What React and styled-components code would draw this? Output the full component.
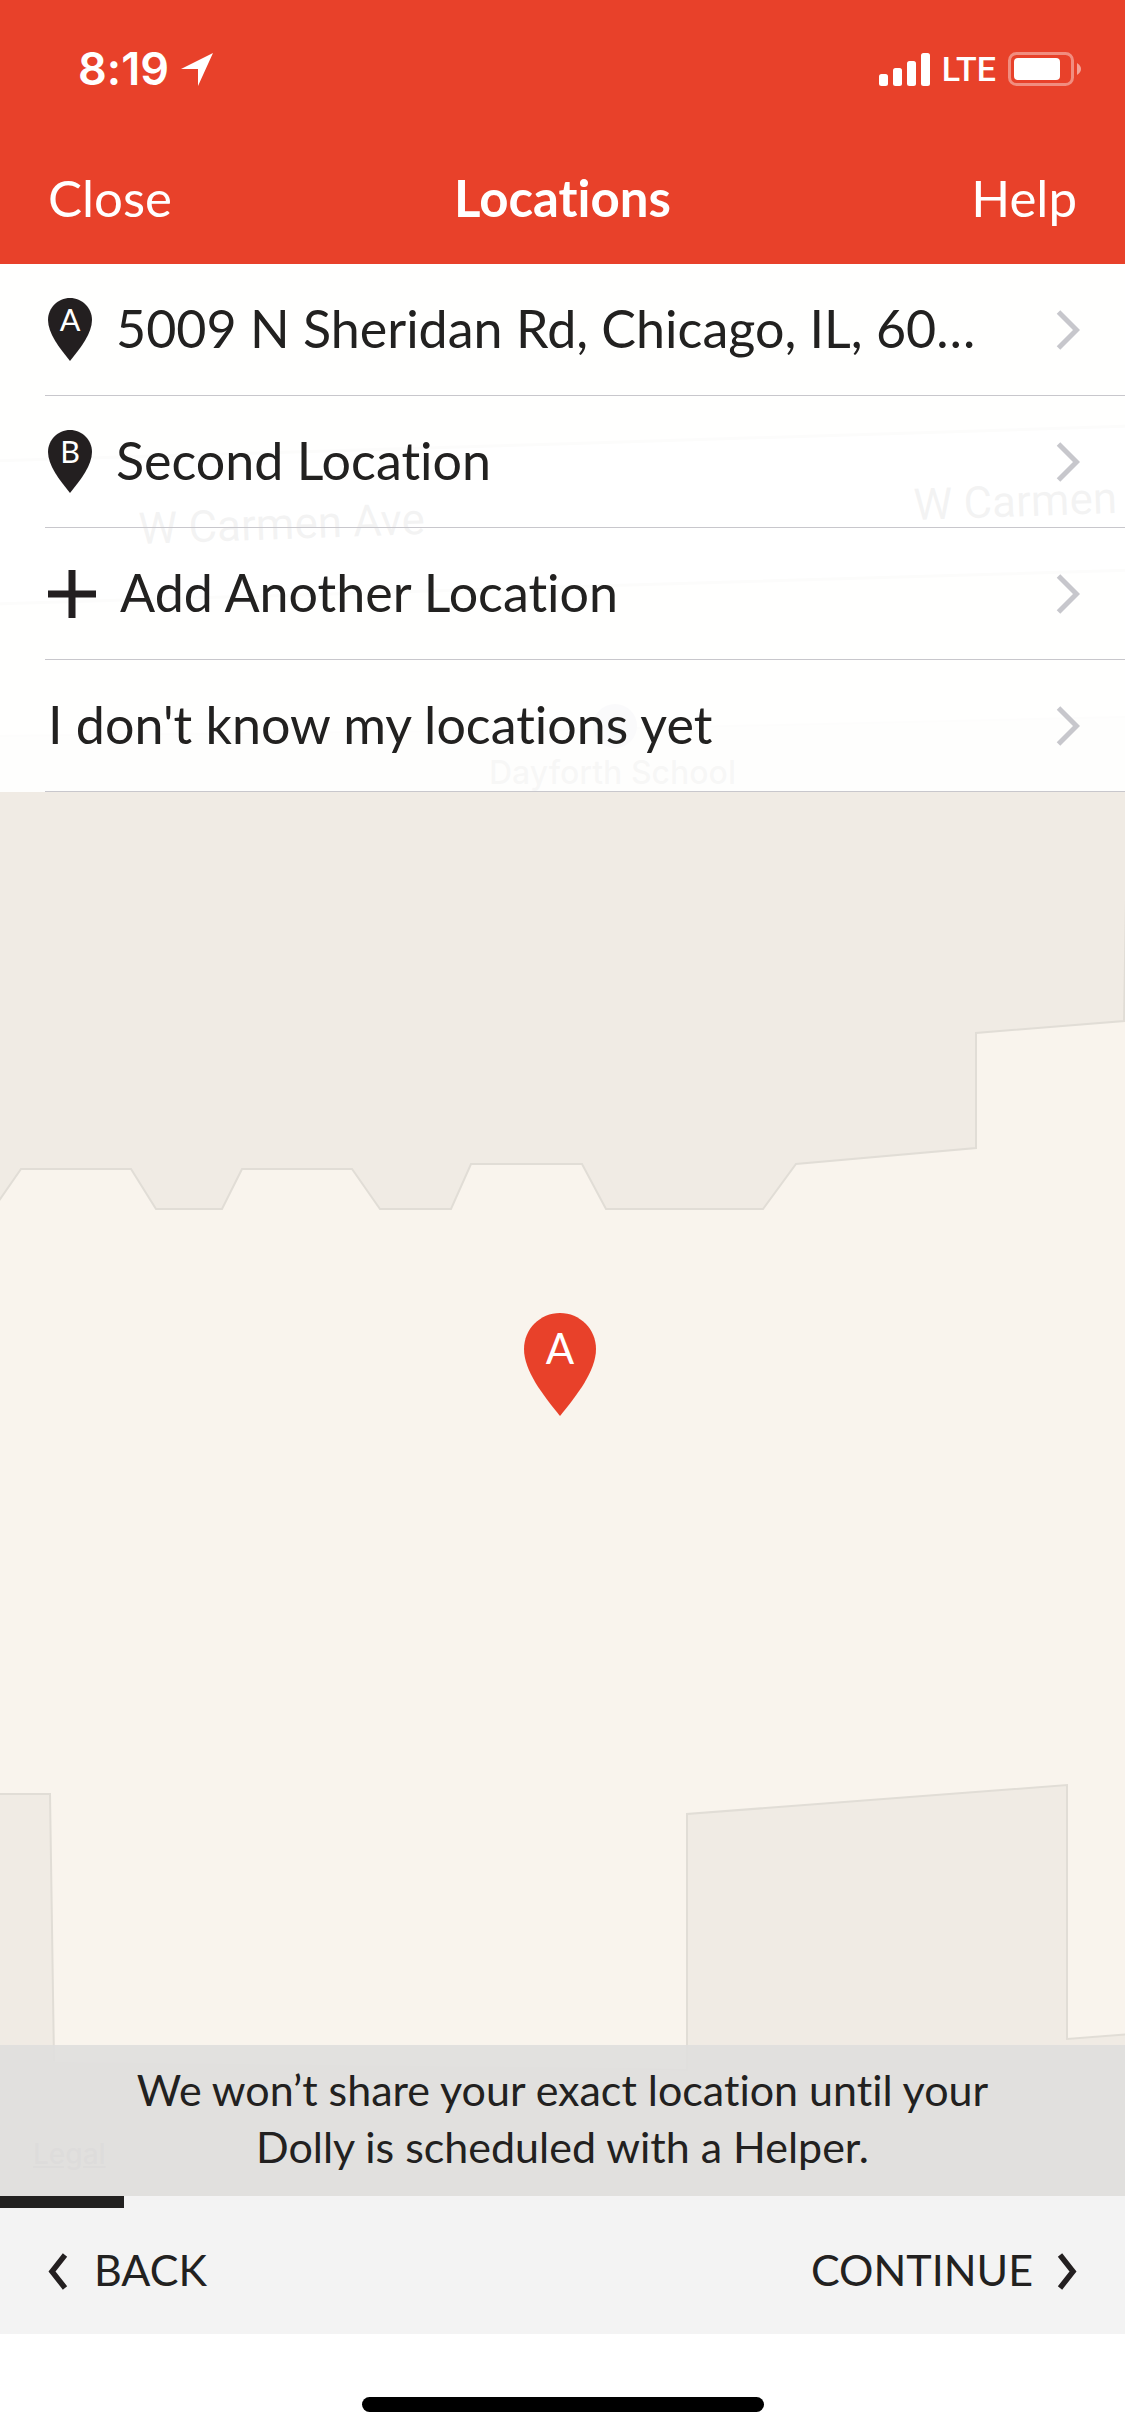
import React from "react";
import styled, { createGlobalStyle } from "styled-components";

const INK = "#222120";
const RED = "#e8412a";

const GlobalStyle = createGlobalStyle`
  *, *::before, *::after { box-sizing: border-box; }
  body { margin: 0; background: #fff; }
  button { margin: 0; padding: 0; border: 0; background: none; color: inherit; font: inherit; cursor: pointer; }
`;

const Screen = styled.div`
  display: flex;
  flex-direction: column;
  min-height: 100vh;
  color: ${INK};
  font-family: Lato, "Open Sans", sans-serif;
  font-variant-ligatures: none;
`;

const Header = styled.header`
  background: ${RED};
  color: #fff;
`;

const StatusBar = styled.div`
  display: flex;
  align-items: center;
  justify-content: space-between;
  height: 132px;
  padding: 6px 44px 0 78px;
  font-family: Inter, sans-serif;
`;

const StatusGroup = styled.div`
  display: flex;
  align-items: center;
  gap: 12px;
`;

const Clock = styled.span`
  font-size: 45px;
  font-weight: 600;
  line-height: 54px;
`;

const Carrier = styled.span`
  font-family: Roboto, sans-serif;
  font-size: 34px;
  font-weight: 500;
  line-height: 40px;
`;

const NavBar = styled.nav`
  display: grid;
  grid-template-columns: 1fr auto 1fr;
  align-items: center;
  height: 132px;
  padding: 0 48px;
  font-size: 51px;
  line-height: 64px;
`;

const NavButton = styled.button`
  justify-self: ${(p) => p.$side};
`;

const Title = styled.h1`
  margin: 0;
  font-size: 51px;
  font-weight: 700;
`;

const MapArea = styled.main`
  position: relative;
  flex: 1;
  display: flex;
  flex-direction: column;
  justify-content: space-between;
  overflow: hidden;
  background: #f9f4ed;
`;

const MapCanvas = styled.svg`
  position: absolute;
  inset: 0;
  width: 100%;
  height: 100%;
`;

const MapPin = styled.div`
  position: absolute;
  left: 49.8%;
  top: 1049px;
  transform: translateX(-50%);
  line-height: 0;
`;

const LegalLink = styled.a`
  position: absolute;
  left: 33px;
  bottom: 26px;
  color: #b4b4b2;
  font: 500 28px/32px Inter, sans-serif;
`;

const LocationList = styled.ul`
  position: relative;
  margin: 0;
  padding: 0;
  list-style: none;
  background: rgba(255, 255, 255, 0.93);
`;

const LocationItem = styled.li`
  margin-left: 45px;
  border-bottom: 1px solid #c8c7cc;
`;

const LocationButton = styled.button`
  display: flex;
  align-items: center;
  gap: 24px;
  width: 100%;
  height: 131px;
  padding: 0 45px 0 3px;
  text-align: left;
  font-size: 52px;
  line-height: 64px;
`;

const LocationLabel = styled.span`
  flex: 1;
  min-width: 0;
  padding-bottom: 3px;
  overflow: hidden;
  white-space: nowrap;
`;

const Notice = styled.p`
  position: relative;
  margin: 0;
  padding: 16px 96px 21px;
  background: rgba(224, 223, 222, 0.93);
  text-align: center;
  font-size: 43px;
  line-height: 57px;
`;

const NoticeLine = styled.span`
  display: block;
`;

const Progress = styled.div`
  height: 12px;
  background: #f3f3f3;
`;

const ProgressFill = styled.div`
  width: 11%;
  height: 100%;
  background: ${INK};
`;

const Footer = styled.footer`
  display: flex;
  align-items: center;
  justify-content: space-between;
  height: 126px;
  padding: 0 48px;
  background: #f3f3f3;
`;

const FooterButton = styled.button`
  display: flex;
  align-items: center;
  gap: ${(p) => p.$gap}px;
  font-size: 43px;
  line-height: 54px;
`;

const FooterLabel = styled.span`
  padding-bottom: 3px;
`;

const HomeArea = styled.div`
  display: flex;
  justify-content: center;
  align-items: flex-end;
  height: 102px;
  padding-bottom: 24px;
  background: #fff;
`;

const HomeIndicator = styled.div`
  width: 402px;
  height: 15px;
  border-radius: 8px;
  background: #000;
`;

const PinText = styled.text`
  font-family: Lato, sans-serif;
  fill: #fff;
  text-anchor: middle;
`;

function Pin({ letter, color, width, height, textSize, baseline }) {
  return (
    <svg width={width} height={height} viewBox="0 0 72 103" aria-hidden="true">
      <path
        fill={color}
        d="M36 0C55.900 0 72 16.100 72 36C72 58 53 82 36 103C19 82 0 58 0 36C0 16.100 16.100 0 36 0Z"
      />
      <PinText x="36" y={baseline} fontSize={textSize}>{letter}</PinText>
    </svg>
  );
}

function Plus() {
  return (
    <svg width="48" height="48" viewBox="0 0 48 48" aria-hidden="true">
      <path d="M24 0V48M0 24H48" stroke="#231f20" strokeWidth="7" />
    </svg>
  );
}

function RowChevron() {
  return (
    <svg width="24" height="40" viewBox="0 0 24 40" fill="none" aria-hidden="true">
      <path d="M2.500 2L20.500 20L2.500 38" stroke="#c7c7cc" strokeWidth="5" />
    </svg>
  );
}

function FooterChevron({ back }) {
  return (
    <svg width="20" height="38" viewBox="0 0 20 38" fill="none" aria-hidden="true">
      <path
        d={back ? "M17 3L4 19.500L17 36" : "M3 3L16 19.500L3 36"}
        stroke="#231f20"
        strokeWidth="5.500"
      />
    </svg>
  );
}

function LocationArrow() {
  return (
    <svg width="32" height="33" viewBox="0 0 32 33" aria-hidden="true">
      <path d="M32 0L17 33V16H0Z" fill="#fff" />
    </svg>
  );
}

function Signal() {
  return (
    <svg width="51" height="33" viewBox="0 0 51 33" fill="#fff" aria-hidden="true">
      <rect x="0" y="21" width="9" height="12" rx="2.500" />
      <rect x="14" y="15" width="9" height="18" rx="2.500" />
      <rect x="28" y="8" width="9" height="25" rx="2.500" />
      <rect x="42" y="0" width="9" height="33" rx="2.500" />
    </svg>
  );
}

function Battery() {
  return (
    <svg width="73" height="34" viewBox="0 0 73 34" aria-hidden="true">
      <rect x="1.500" y="1.500" width="63" height="31" rx="7" fill="none" stroke="#fff" strokeOpacity="0.400" strokeWidth="3" />
      <rect x="6" y="6" width="46" height="22" rx="4" fill="#fff" />
      <path d="M69 11C72 13 73 15 73 17C73 19 72 21 69 23Z" fill="#fff" fillOpacity="0.500" />
    </svg>
  );
}

function MapDrawing() {
  return (
    <MapCanvas viewBox="0 264 1125 1932" preserveAspectRatio="xMidYMin slice" aria-hidden="true">
      <path d="M-9 461L560 444L1134 426V570L560 587L-9 604Z" fill="#fff" stroke="#d0cdc6" strokeWidth="3" />
      <g fill="#f0ebe4" stroke="#e1ddd6" strokeWidth="2">
        <path d="M-4 736L560 730L1129 717L1124 1021L976 1033V1148L796 1164L763 1209H606L582 1164H471L451 1209H380L352 1169H242L222 1209H156L131 1169H21L-4 1205Z" />
        <path d="M-4 1794H50L54 2060L600 2067L687 2070V1814L1067 1785V2039L1130 2034V2210H-4Z" />
      </g>
      <path d="M55 2046V2062L686 2069V2046Z" fill="#f9f4ed" />
      <circle cx="615" cy="726" r="22" fill="#b4b4be" />
      <g fill="#5d5d5d" fontFamily="Roboto, sans-serif">
        <text x="139" y="544" fontSize="44" transform="rotate(-2 139 544)">W Carmen Ave</text>
        <text x="914" y="520" fontSize="44" transform="rotate(-2 914 520)">W Carmen</text>
        <text x="489" y="784" fontFamily="Inter, sans-serif" fontSize="32" fontWeight="500" fill="#8c8c84">Dayforth School</text>
      </g>
    </MapCanvas>
  );
}

const locations = [
  { label: "5009 N Sheridan Rd, Chicago, IL, 60…", letter: "A" },
  { label: "Second Location", letter: "B" },
  { label: "Add Another Location", plus: true },
  { label: "I don't know my locations yet" },
];

export default function App() {
  return (
    <Screen>
      <GlobalStyle />
      <Header>
        <StatusBar>
          <StatusGroup>
            <Clock>8:19</Clock>
            <LocationArrow />
          </StatusGroup>
          <StatusGroup>
            <Signal />
            <Carrier>LTE</Carrier>
            <Battery />
          </StatusGroup>
        </StatusBar>
        <NavBar>
          <NavButton type="button" $side="start">Close</NavButton>
          <Title>Locations</Title>
          <NavButton type="button" $side="end">Help</NavButton>
        </NavBar>
      </Header>
      <MapArea>
        <MapDrawing />
        <MapPin>
          <Pin letter="A" color={RED} width={72} height={103} textSize={42} baseline={51} />
        </MapPin>
        <LegalLink href="#legal">Legal</LegalLink>
        <LocationList>
          {locations.map((item) => (
            <LocationItem key={item.label}>
              <LocationButton type="button">
                {item.letter && (
                  <Pin letter={item.letter} color="#231f20" width={44} height={63} textSize={50} baseline={54} />
                )}
                {item.plus && <Plus />}
                <LocationLabel>{item.label}</LocationLabel>
                <RowChevron />
              </LocationButton>
            </LocationItem>
          ))}
        </LocationList>
        <Notice>
          <NoticeLine>We won’t share your exact location until your</NoticeLine>
          <NoticeLine>Dolly is scheduled with a Helper.</NoticeLine>
        </Notice>
      </MapArea>
      <Progress>
        <ProgressFill />
      </Progress>
      <Footer>
        <FooterButton type="button" $gap={26}>
          <FooterChevron back />
          <FooterLabel>BACK</FooterLabel>
        </FooterButton>
        <FooterButton type="button" $gap={24}>
          <FooterLabel>CONTINUE</FooterLabel>
          <FooterChevron />
        </FooterButton>
      </Footer>
      <HomeArea>
        <HomeIndicator />
      </HomeArea>
    </Screen>
  );
}
